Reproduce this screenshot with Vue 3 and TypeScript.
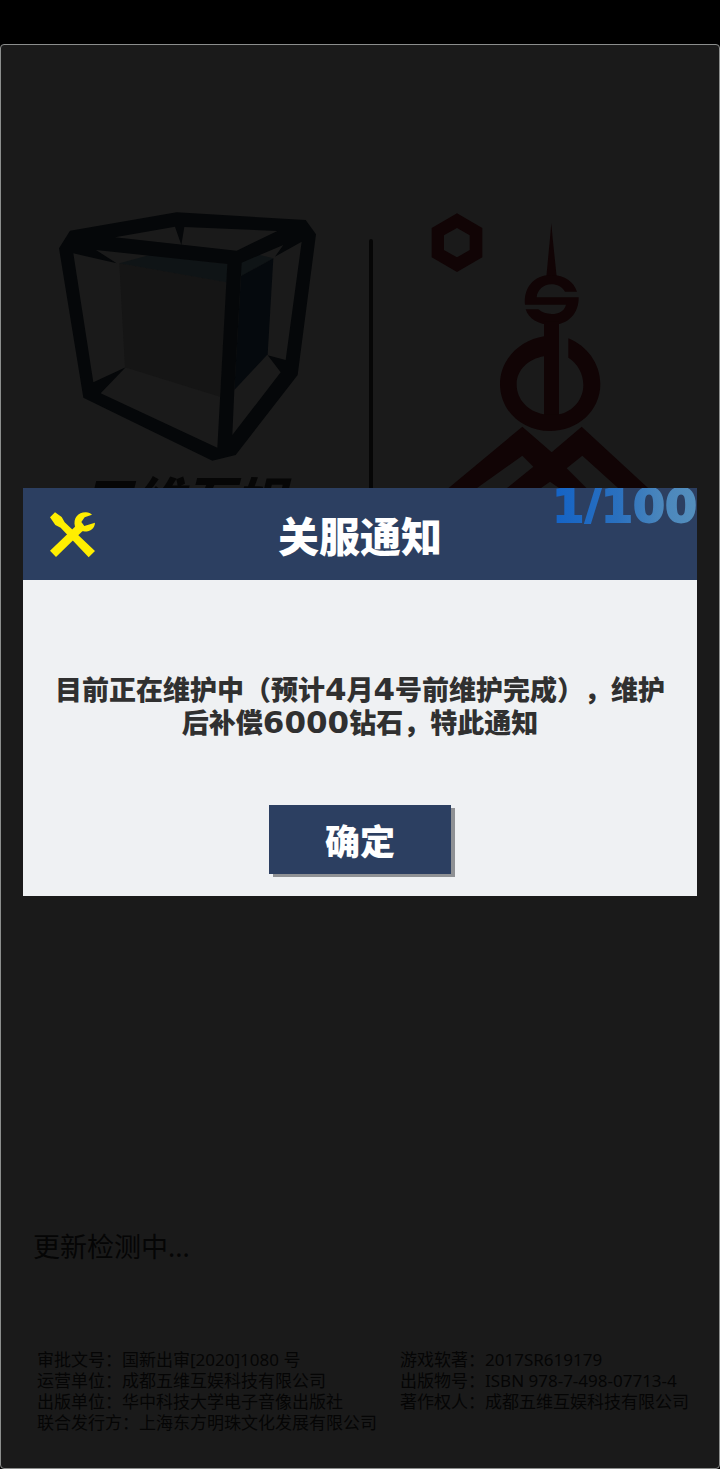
<script setup lang="ts">
import { ref } from 'vue'

const open = ref(true)

const leftInfo: string[] = [
  '审批文号：国新出审[2020]1080 号',
  '运营单位：成都五维互娱科技有限公司',
  '出版单位：华中科技大学电子音像出版社',
  '联合发行方：上海东方明珠文化发展有限公司',
]
const rightInfo: string[] = [
  '游戏软著：2017SR619179',
  '出版物号：ISBN 978-7-498-07713-4',
  '著作权人：成都五维互娱科技有限公司',
]
</script>

<template>
  <div class="page">
    <main class="stage">
      <section class="logos">
        <div class="brand">
          <svg class="cube" viewBox="0 0 900 825" aria-hidden="true">
            <path fill="#151515" d="M238 205 560 262 540 605 255 517Z" />
            <path fill="#0f1416" d="M238 205 330 180 562 207 560 262ZM603 200 650 178 700 190 603 243Z" />
            <path fill="#05090d" d="M603 243 700 190 683 478 583 585Z" />
            <path
              fill="#050709"
              fill-rule="evenodd"
              d="M90 107 410 52 797 75 828 118 773 540 587 780 517 797 130 608 57 160Z
                 M225 127 405 95 424 150 433 96 712 108 590 167Z
                 M100 175 230 205 168 165 562 207 532 758 182 595 257 517 160 562Z
                 M605 203 730 150 705 185 785 140 737 495 683 481 722 532 577 720 583 585Z"
            />
          </svg>
          <span class="brand-name">五维互娱</span>
        </div>
        <div class="divider"></div>
        <svg class="tower" viewBox="69 0 990 900" aria-hidden="true">
          <g fill="#110405">
            <path fill-rule="evenodd" d="M321 55 397 99V187L321 231 245 187V99ZM321 99 282 121V165L321 187 359 165V121Z" />
            <path d="M604 85 608 130 620 245H589L600 130Z" />
            <path d="M525 329C520 280 550 240 604 240C645 240 672 262 681 290H645C635 275 622 268 604 268C580 268 562 285 560 307H686C687 355 655 390 605 390C565 390 535 370 527 343H565C575 352 590 357 605 357C625 357 642 350 648 329Z" />
            <path d="M582 380H627V670H582Z" />
            <path d="M655 430C710 452 751 505 751 567C751 648 683 708 600 708C517 708 450 648 450 567C450 492 510 436 582 424V484C535 492 500 525 500 568C500 615 535 650 582 658H627C670 650 700 612 700 570C700 535 682 505 655 488Z" />
            <path d="M295 880 517 695 605 772 695 695 895 880H805L697 782 650 820 710 880H628L600 860 572 880H470L550 815 517 782 380 880Z" />
          </g>
        </svg>
      </section>

      <footer class="bottom">
        <p class="status">更新检测中...</p>
        <div class="info">
          <ul>
            <li v-for="line in leftInfo" :key="line">{{ line }}</li>
          </ul>
          <ul>
            <li v-for="line in rightInfo" :key="line">{{ line }}</li>
          </ul>
        </div>
      </footer>

      <div v-if="open" class="overlay">
        <section class="dialog" role="dialog" aria-labelledby="dialog-title">
          <header class="head">
            <svg class="tools" viewBox="0 0 168 168" aria-hidden="true">
              <g fill="#ffee00">
                <path d="M18 34 33 19 53 33 62 49 153 135 134 154 50 65 34 57Z" />
                <path d="M18 134 93 62C86 36 104 18 126 19C134 19 140 22 144 26L122 34 112 48 121 60 153 50C152 68 137 79 115 76L36 153Z" />
              </g>
            </svg>
            <h1 id="dialog-title" class="title">关服通知</h1>
            <span class="count">1/100</span>
          </header>
          <div class="body">
            <p class="message">
              目前正在维护中（预计<span class="num">4</span>月<span class="num">4</span>号前维护完成），维护<br />后补偿<span class="num">6000</span>钻石，特此通知
            </p>
            <button class="confirm" type="button" @click="open = false">确定</button>
          </div>
        </section>
      </div>
    </main>
  </div>
</template>

<style>
body {
  margin: 0;
  background: #000;
}
</style>

<style scoped>
.page {
  box-sizing: border-box;
  min-height: 100vh;
  padding-top: 44px;
  display: flex;
  flex-direction: column;
  background: #000;
  font-family: "Noto Sans", "Noto Sans CJK SC", sans-serif;
}
.stage {
  position: relative;
  flex: 1;
  display: flex;
  flex-direction: column;
  justify-content: space-between;
  border: 1px solid #8c8e8d;
  border-radius: 4px;
  background: #1a1a1a;
  color: #050505;
}
.logos {
  display: grid;
  grid-template-columns: 368fr 4px 346fr;
  padding-top: 150px;
}
.brand {
  display: flex;
  flex-direction: column;
  align-items: center;
  padding-left: 10px;
}
.cube {
  width: 300px;
  height: 275px;
}
.brand-name {
  padding-right: 14px;
  font: italic 900 51px/56px "Noto Sans CJK SC", sans-serif;
  color: #060606;
}
.divider {
  margin-top: 44px;
  border-radius: 2px;
  background: #060606;
}
.tower {
  width: 330px;
  height: 300px;
}
.bottom {
  padding: 0 28px 35px 36px;
}
.status {
  margin: 0 0 84px -4px;
  font-size: 27px;
  line-height: 36px;
}
.info {
  display: flex;
  justify-content: space-between;
  font-size: 17px;
  line-height: 21px;
  white-space: nowrap;
}
.info ul {
  margin: 0;
  padding: 0;
  list-style: none;
}
.info ul:last-child {
  padding-right: 2px;
}
.overlay {
  position: absolute;
  inset: 0;
  padding: 443px 22px 0;
}
.dialog {
  background: #eff1f3;
}
.head {
  position: relative;
  display: flex;
  align-items: center;
  justify-content: center;
  height: 92px;
  background: #2c3f61;
}
.tools {
  position: absolute;
  left: 21px;
  top: 18px;
  width: 56px;
  height: 56px;
}
.title {
  margin: 0;
  font: 900 41px/58px "Noto Sans CJK SC", sans-serif;
  color: #fff;
}
.count {
  position: absolute;
  right: 0;
  top: 0;
  font: bold 46px/36px "DejaVu Sans", sans-serif;
  background: linear-gradient(90deg, #1463c6, #2a70be 45%, #4a86bc 75%, #548fbd);
  background-clip: text;
  -webkit-background-clip: text;
  -webkit-text-stroke: 2px transparent;
  color: transparent;
}
.body {
  display: flex;
  flex-direction: column;
  align-items: center;
  padding: 92px 0 22px;
}
.message {
  margin: 0 0 67px;
  font: 900 27px/33px "Noto Sans CJK SC", sans-serif;
  color: #303030;
  text-align: center;
  text-spacing-trim: space-all;
}
.num {
  font: bold 31px/1 "DejaVu Sans", sans-serif;
}
.confirm {
  width: 182px;
  height: 69px;
  padding: 0;
  border: 0;
  background: #2c3f61;
  box-shadow: 4px 3px #8f9194;
  color: #fff;
  font: 900 35px/69px "Noto Sans CJK SC", sans-serif;
  cursor: pointer;
}
</style>
